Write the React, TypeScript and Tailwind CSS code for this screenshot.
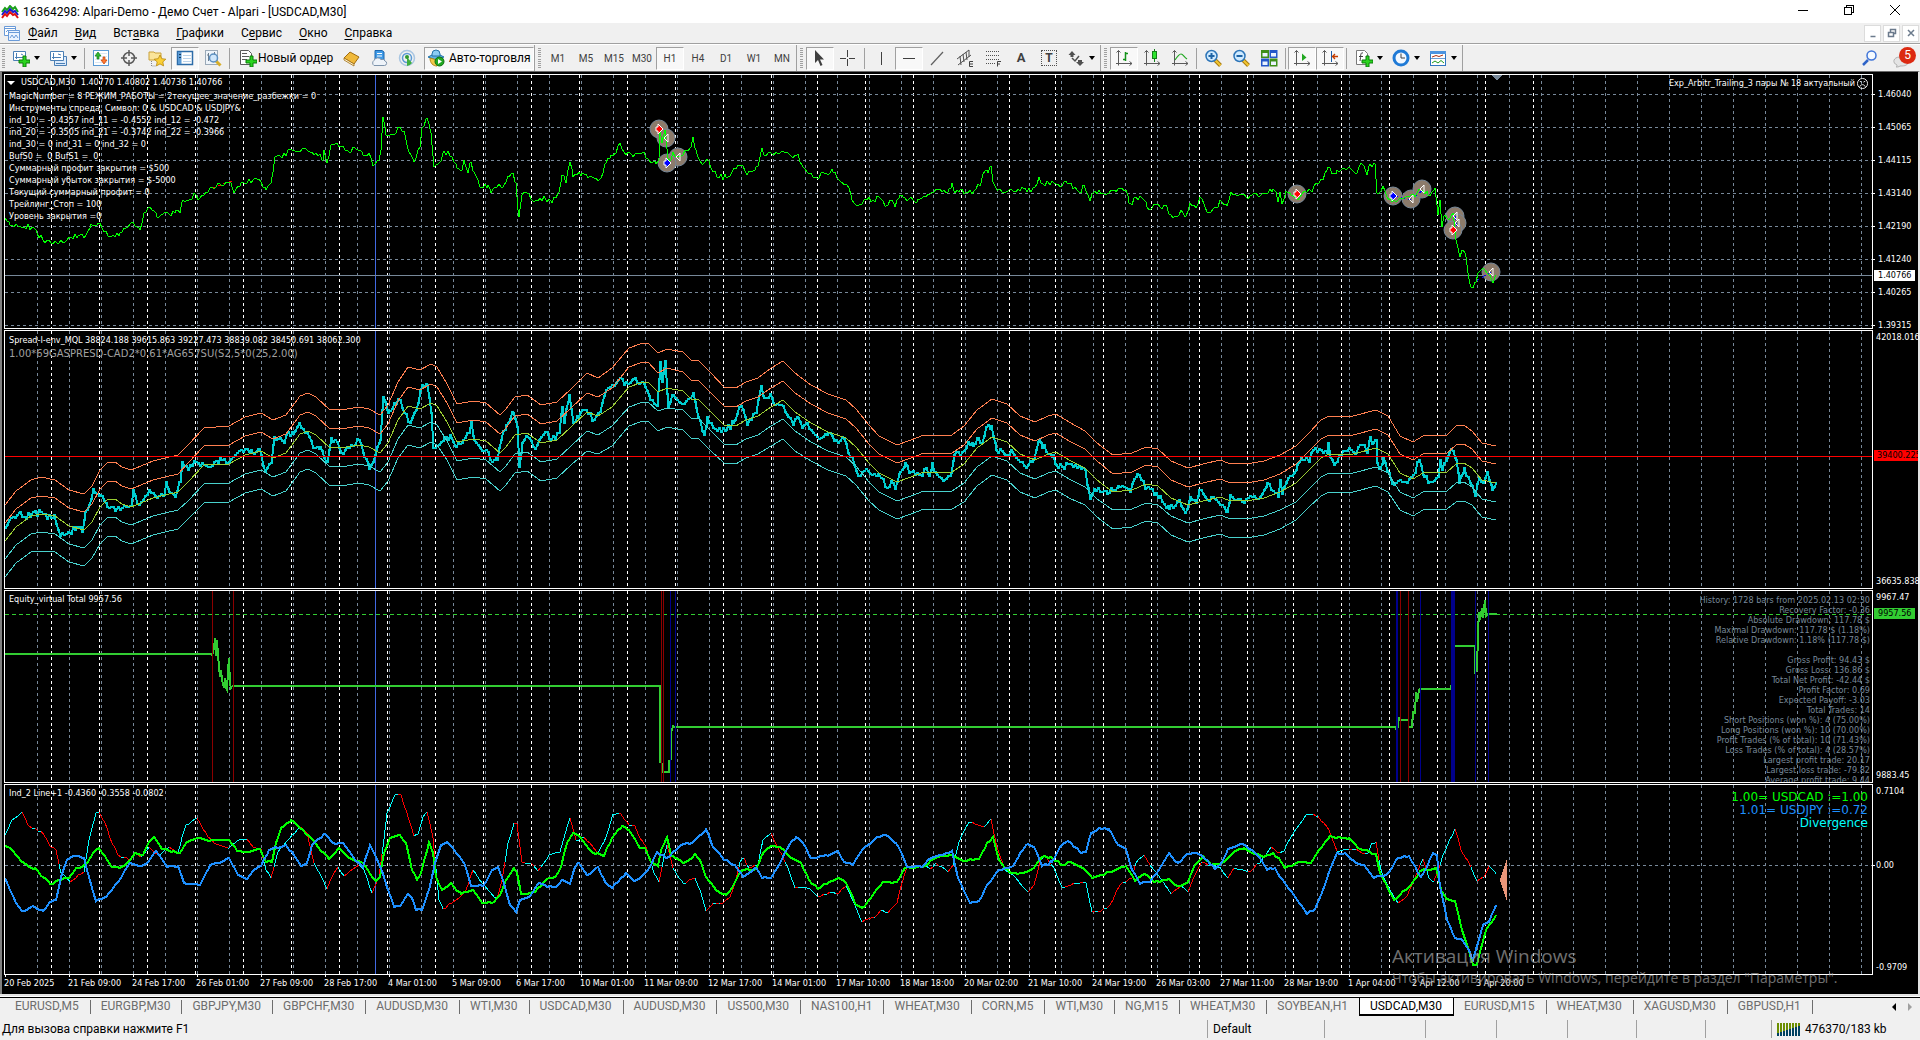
import type { ReactNode } from "react";
import clsx from "clsx";

type Point = [number, number];

const LEFT = 5;
const WIDTH = 1867;

const parse = (data: string): Point[] =>
  data
    .trim()
    .split(/\s+/)
    .map((pair) => pair.split(",").map(Number) as Point);

const toPoints = (points: Point[]) => points.map(([x, y]) => `${x},${y}`).join(" ");

const toSteps = (points: Point[]) => points.map(([x, y]) => `${x},${y} ${x + 1},${y}`).join(" ");

// Fills the space between two anchors with bars, each a little off the straight line
function quote(data: string, step: number, noise: number) {
  const anchors = parse(data);
  const out: Point[] = [];
  let seed = 7;
  for (let i = 0; i < anchors.length - 1; i++) {
    const [x1, y1] = anchors[i];
    const [x2, y2] = anchors[i + 1];
    out.push([x1, y1]);
    for (let x = x1 + step; x < x2; x += step) {
      seed = (seed * 1103515245 + 12345) % 2147483648;
      const shift = (seed / 2147483648 - 0.5) * 2 * noise;
      out.push([x, Math.round(y1 + ((y2 - y1) * (x - x1)) / (x2 - x1) + shift)]);
    }
  }
  out.push(anchors[anchors.length - 1]);
  return out;
}

const price = quote(
  `5,218 10,225 16,224 24,227 32,227 37,233 45,243 55,241 63,243 71,237 78,236 84,238 91,224 98,223 104,232 111,237 120,233
  133,222 140,230 144,213 150,207 157,217 167,212 171,216 176,210 180,213 183,200 190,199 194,193 198,200 206,192 216,187
  227,182 231,183 234,193 241,183 247,183 255,178 261,182 266,190 271,183 275,157 282,158 288,150 302,149 310,152 320,154
  323,160 324,150 327,163 331,145 337,143 347,150 356,149 363,155 369,153 373,166 379,160 381,150 383,117 386,135 392,134
  400,127 405,135 409,152 414,162 420,147 422,128 427,118 431,133 434,167 439,163 444,151 452,157 457,168 462,170 464,160
  468,173 471,162 474,172 481,187 488,185 491,193 497,187 504,185 509,177 513,173 516,183 518,210 519,217 522,195 527,193
  534,202 545,198 552,203 559,192 562,175 566,183 570,162 573,177 582,173 588,178 601,178 606,163 611,155 616,153 620,143
  624,152 633,157 640,153 644,152 647,158 656,164 659,158 660,128 662,143 665,130 668,158 671,160 673,152 679,157 686,150
  691,147 693,137 696,150 703,164 707,159 711,168 717,177 726,177 732,172 741,165 747,175 756,167 759,162 762,148 764,155
  770,152 774,155 781,152 793,158 798,154 803,167 811,173 817,178 824,173 833,172 842,182 847,185 852,200 858,206 867,200
  873,200 879,197 886,206 890,200 895,207 900,195 903,197 909,199 918,199 928,194 936,189 942,192 949,189 952,183 955,193
  960,190 966,192 974,191 981,183 985,171 988,173 991,166 993,182 998,190 1004,193 1009,190 1016,192 1023,188 1027,192
  1035,187 1039,177 1043,184 1048,182 1054,183 1060,187 1067,183 1075,187 1081,193 1084,185 1090,201 1093,193 1103,193
  1116,192 1126,190 1129,203 1132,205 1136,197 1144,200 1147,207 1152,208 1158,204 1160,207 1167,207 1171,215 1177,217
  1181,210 1186,216 1190,203 1196,208 1200,197 1205,207 1211,212 1218,207 1220,200 1227,206 1231,192 1240,194 1246,197
  1264,193 1273,189 1276,192 1278,202 1280,192 1282,204 1287,192 1294,197 1300,197 1307,192 1312,192 1317,183 1323,180
  1328,167 1332,174 1337,170 1349,167 1357,173 1362,164 1367,175 1370,164 1375,164 1377,193 1383,186 1387,197 1392,202
  1400,198 1409,197 1417,193 1423,190 1428,195 1435,188 1438,215 1440,200 1442,227 1445,215 1449,220 1453,213 1456,240
  1460,257 1463,250 1466,257 1468,273 1471,287 1476,282 1479,272 1485,270 1490,275 1493,283 1496,275`,
  2,
  3,
);

const spread = quote(
  `5,528 11,518 20,512 24,517 31,514 41,512 47,519 54,515 60,536 69,533 76,527 82,532 85,512 89,505 93,489 100,495 107,507
  116,509 131,506 133,490 137,504 143,500 149,490 157,498 164,495 166,482 169,492 175,497 180,482 182,462 188,470 194,461
  208,467 222,460 229,462 237,453 245,449 252,453 259,449 265,472 271,463 274,437 284,443 288,432 293,434 299,423 307,433
  313,448 320,447 327,462 331,438 337,442 341,453 351,445 359,440 364,457 369,469 375,455 380,440 383,397 388,413 394,403
  400,400 404,413 410,423 416,410 422,385 427,385 431,413 433,448 439,445 444,437 451,438 456,447 463,440 469,433 471,422
  474,440 480,448 486,450 492,462 497,460 501,440 506,425 513,413 517,427 519,467 522,443 527,437 535,449 541,437 545,432
  551,440 559,433 562,407 564,423 569,395 573,423 578,418 584,410 594,420 600,412 606,390 612,385 620,378 624,385 633,379
  640,383 645,387 650,400 657,406 660,362 662,382 665,361 668,407 673,395 680,403 688,399 693,393 696,408 704,435 707,417
  711,423 717,431 726,430 733,423 739,407 743,410 747,425 756,413 761,386 764,398 770,394 773,403 781,405 788,417 793,425
  798,418 802,428 807,423 811,430 817,437 828,433 834,441 844,439 848,453 852,457 858,476 864,471 879,476 887,488 891,481
  895,489 900,472 905,463 909,473 920,475 926,468 929,476 932,463 935,472 944,480 951,473 954,455 962,452 968,442 973,446
  978,438 982,443 986,427 991,426 996,450 1005,455 1012,452 1018,460 1026,468 1034,459 1039,440 1042,448 1044,445 1048,454
  1053,455 1056,465 1062,467 1069,464 1077,468 1085,470 1088,488 1090,499 1094,489 1107,494 1118,486 1130,492 1137,474
  1146,488 1156,493 1162,502 1169,509 1179,500 1185,513 1190,497 1196,503 1199,490 1205,497 1216,500 1222,505 1227,512
  1230,495 1242,502 1252,497 1260,497 1267,483 1278,497 1280,480 1282,494 1288,478 1294,473 1297,465 1302,460 1309,462
  1313,450 1327,453 1328,443 1330,457 1335,463 1339,455 1349,448 1356,453 1362,445 1367,453 1370,437 1373,443 1376,440
  1377,463 1380,468 1383,458 1392,484 1400,480 1407,483 1413,475 1419,460 1424,477 1430,482 1438,477 1440,460 1442,470
  1447,458 1451,449 1456,460 1459,483 1464,468 1470,483 1475,496 1479,478 1483,483 1487,472 1492,490 1496,483`,
  2,
  3,
);

const average = parse(
  `5,541 16,527 31,516 41,514 55,516 69,526 84,530 92,522 100,507 108,499 115,499 122,504 131,507 141,503 153,498 165,495
  178,492 188,482 204,465 229,464 245,455 261,451 273,458 286,453 300,434 308,431 316,435 330,448 347,447 359,445 369,447
  380,453 388,443 398,420 408,406 420,409 431,403 437,406 447,422 457,442 473,439 486,441 500,453 506,447 515,435 527,433
  541,443 557,440 571,427 587,412 598,416 612,407 629,387 640,383 648,382 658,392 667,388 683,391 691,399 699,400 711,412
  724,425 736,426 746,420 758,416 771,407 783,400 795,412 811,423 828,432 846,438 856,447 869,463 879,473 897,482 911,477
  924,472 952,472 964,464 977,448 992,437 1007,442 1020,454 1035,460 1048,454 1056,452 1069,460 1085,468 1097,480 1113,492
  1132,490 1146,484 1158,486 1171,498 1188,505 1203,501 1220,497 1228,500 1246,501 1264,498 1280,492 1296,483 1309,470
  1321,458 1329,454 1353,454 1376,448 1388,454 1400,473 1413,479 1423,473 1447,472 1456,464 1464,463 1472,468 1482,480
  1496,483`,
);

// The envelope widens with the price level
const envelope = (k: number) =>
  average.map(([x, y]): Point => [x, Math.round(y - k * (18 + (540 - y) * 0.01))]);

const equity = [
  "5,654 212,654",
  "212,656 214,648 215,638 216,656 217,640 218,656 220,677 221,670 222,680 224,688 225,678 226,688 227,690 228,670 229,658 230,684 231,688 232,686",
  "232,686 660,686 660,763",
  "662,763 663,772 669,772 669,760",
  "671,760 671,733 673,726 675,727 1396,727 1397,732 1399,717 1400,720 1408,720",
  "1409,727 1412,727 1413,712 1415,713 1416,692 1417,702 1419,690 1420,689 1451,689 1451,685",
  "1455,646 1475,646 1475,672 1477,670 1478,633 1479,612 1480,620 1482,608 1483,618 1485,600 1486,616 1488,614 1497,614",
];

const equityMarks = [
  { x: 212, w: 1, color: "#8b0000" },
  { x: 233, w: 1, color: "#8b0000" },
  { x: 661, w: 1, color: "#8b0000" },
  { x: 663, w: 1, color: "#8b0000" },
  { x: 670, w: 1, color: "#00008b" },
  { x: 675, w: 1, color: "#00008b" },
  { x: 1396, w: 2, color: "#00008b" },
  { x: 1400, w: 1, color: "#8b0000" },
  { x: 1408, w: 1, color: "#8b0000" },
  { x: 1420, w: 1, color: "#00008b" },
  { x: 1451, w: 4, color: "#00008b" },
  { x: 1475, w: 1, color: "#00008b" },
  { x: 1488, w: 1, color: "#00008b" },
];

const usdcad = quote(
  `5,846 10,848 18,857 28,866 35,868 43,877 50,884 61,880 69,878 76,868 86,865 93,853 99,848 106,858 112,867 119,868 127,863
  135,853 143,855 149,842 154,837 162,849 180,853 186,843 197,838 206,840 229,840 237,851 249,852 260,849 266,862 272,862
  276,843 281,828 291,820 300,828 310,837 318,847 329,859 339,848 349,858 363,863 369,872 376,881 380,877 384,853 390,838
  400,835 406,843 412,870 417,880 421,873 429,842 433,853 436,877 442,890 451,883 461,894 473,890 483,903 494,902 500,895
  506,880 514,868 517,873 521,894 535,892 549,878 555,877 561,867 567,843 573,833 580,837 592,852 604,856 612,838 622,826
  629,830 640,848 645,848 652,863 658,866 661,850 667,837 671,855 683,863 689,860 695,854 700,860 705,875 716,890 726,895
  732,888 741,871 756,869 764,852 771,846 781,848 791,858 801,863 809,880 818,889 829,882 838,878 846,883 856,905 862,908
  871,898 883,882 897,882 905,868 922,867 938,857 952,855 964,861 979,859 987,843 993,837 999,860 1009,872 1020,873
  1034,868 1042,857 1052,858 1062,865 1071,862 1085,870 1092,878 1109,872 1126,866 1135,881 1145,874 1154,882 1169,879
  1178,886 1188,882 1195,865 1203,856 1211,865 1222,863 1234,852 1244,848 1252,853 1264,857 1273,853 1280,860 1285,868
  1296,863 1311,863 1319,850 1330,836 1349,838 1360,849 1376,854 1380,873 1394,900 1411,885 1421,871 1436,868 1441,890
  1447,899 1455,901 1462,930 1468,948 1473,965 1477,964 1486,930 1496,915`,
  3,
  1,
);

const usdjpy = quote(
  `5,878 10,890 16,903 22,911 33,906 43,911 49,903 56,900 61,877 67,860 76,856 84,858 89,877 96,901 106,897 118,882 130,863
  141,866 148,862 156,851 167,867 178,866 184,883 200,885 210,865 222,862 229,858 238,875 247,879 254,870 261,866 269,850
  286,845 294,855 301,866 307,863 312,845 325,834 333,843 343,843 353,857 363,867 370,845 376,857 384,877 394,907 401,905
  408,894 413,900 416,910 422,910 429,890 435,863 441,845 447,842 453,848 465,865 471,886 484,885 492,870 498,867 503,880
  510,905 516,912 520,900 531,895 539,883 547,887 556,887 562,880 570,884 575,867 579,863 587,875 598,867 605,882 612,888
  626,873 634,881 640,878 648,870 657,852 667,858 681,845 693,842 706,829 713,847 724,860 735,865 743,877 756,868 762,878
  771,878 779,865 789,845 796,837 803,843 811,858 828,856 838,851 844,862 853,865 862,850 877,837 886,835 896,843 901,852
  907,867 922,867 931,858 952,851 958,878 970,903 979,901 987,885 999,870 1013,866 1020,853 1028,844 1034,847 1042,866
  1052,862 1060,847 1068,841 1081,853 1086,852 1091,833 1099,828 1109,829 1118,845 1126,849 1132,870 1140,884 1150,882
  1160,868 1169,853 1178,863 1187,854 1199,854 1207,860 1215,869 1220,865 1228,849 1242,844 1252,850 1260,858 1267,870
  1275,868 1280,877 1286,885 1296,898 1307,914 1315,909 1323,890 1331,867 1337,853 1345,853 1356,863 1364,865 1374,878
  1387,874 1398,858 1409,856 1421,877 1427,867 1433,853 1437,855 1440,887 1447,920 1455,938 1462,940 1469,950 1473,960
  1478,943 1483,925 1489,922 1496,905`,
  3,
  1,
);

const divergence = quote(
  `5,835 12,820 22,812 29,826 41,831 51,847 56,850 61,873 70,882 78,875 84,872 89,840 96,813 99,812 107,828 112,843 118,855
  129,860 135,853 141,857 149,847 159,856 169,847 178,853 182,837 186,825 197,818 208,837 216,844 229,848 239,840 247,839
  253,847 261,849 266,870 271,878 278,852 292,835 301,827 307,833 314,863 327,889 333,875 338,867 344,876 359,865 364,870
  372,893 379,877 383,847 387,813 395,795 401,795 408,817 414,836 418,834 423,817 427,812 433,838 439,900 443,909 453,902
  465,892 473,870 482,883 497,899 502,880 508,843 514,823 517,824 522,862 531,863 538,871 549,855 560,852 564,838 570,818
  576,840 584,837 598,853 606,837 613,814 621,814 629,825 635,826 640,838 646,847 654,873 659,882 664,857 667,845 673,868
  683,883 695,878 700,890 706,911 713,903 720,904 730,897 736,880 740,862 744,858 749,868 758,865 763,840 771,833 779,850
  788,868 795,888 809,888 818,897 830,892 839,893 846,886 854,903 862,922 875,917 882,910 888,913 897,903 902,883 907,867
  926,866 930,869 936,863 948,872 953,865 959,842 969,822 984,827 991,819 997,847 1005,870 1013,875 1028,892 1034,885
  1040,862 1045,855 1054,868 1062,887 1077,883 1086,883 1092,912 1101,911 1110,905 1120,885 1132,878 1136,863 1144,855
  1154,870 1162,880 1171,894 1181,886 1188,892 1195,875 1202,862 1220,867 1228,878 1234,868 1248,872 1260,863 1271,847
  1280,853 1284,851 1294,832 1307,814 1318,816 1329,830 1337,851 1356,849 1362,853 1368,853 1372,843 1376,842 1381,870
  1390,890 1398,903 1407,896 1417,873 1423,859 1429,878 1434,881 1443,855 1455,829 1462,852 1471,867 1477,881 1484,877
  1489,866 1496,874`,
  3,
  1,
);

const ZERO = 865;

// Bars that move away from zero are aqua, bars that come back are red
const divergencePath = (away: boolean) =>
  divergence
    .slice(1)
    .map(([x, y], i) => {
      const [px, py] = divergence[i];
      const grows = Math.abs(y - ZERO) >= Math.abs(py - ZERO);
      return grows === away ? `M${px} ${py}L${x} ${y}` : "";
    })
    .join("");

const hours = Array.from({ length: 58 }, (_, i) => 37 + i * 32);

const days = [
  ...Array.from({ length: 16 }, (_, i) => 51 + i * 48),
  ...Array.from({ length: 5 }, (_, i) => 817 + i * 48),
  ...Array.from({ length: 5 }, (_, i) => 1055 + i * 48),
  ...Array.from({ length: 6 }, (_, i) => 1293 + i * 48),
];

const deals = [
  { x: 659, y: 129, kind: "sell" },
  { x: 666, y: 138, kind: "close" },
  { x: 678, y: 157, kind: "close" },
  { x: 667, y: 163, kind: "buy" },
  { x: 1297, y: 194, kind: "sell" },
  { x: 1393, y: 196, kind: "buy" },
  { x: 1411, y: 199, kind: "close" },
  { x: 1422, y: 189, kind: "close" },
  { x: 1455, y: 216, kind: "close" },
  { x: 1457, y: 223, kind: "close" },
  { x: 1453, y: 230, kind: "sell" },
  { x: 1491, y: 272, kind: "close" },
];

const comment = [
  "MagicNumber = 8 РЕЖИМ_РАБОТЫ = 2текущее_значение_разбежки = 0",
  "Инструменты спреда, Символ: 0 & USDCAD & USDJPY&",
  "ind_10 = -0.4357 ind_11 = -0.4552 ind_12 = -0.472",
  "ind_20 = -0.3505 ind_21 = -0.3742 ind_22 = -0.3966",
  "ind_30 = 0 ind_31 = 0 ind_32 = 0",
  "BufS0 =  0 BufS1 =  0",
  "Суммарный профит закрытия = $500",
  "Суммарный убыток закрытия = $-5000",
  "Текущий суммарный профит = 0",
  "Трейлинг_Стоп = 100",
  "Уровень закрытия =0",
];

const report = [
  "History: 1728 bars from 2025.02.13 02:30",
  "Recovery Factor: -0.36",
  "Absolute Drawdown: 117.78 $",
  "Maximal Drawdown: 117.78 $ (1.18%)",
  "Relative Drawdown: 1.18% (117.78 $)",
  "",
  "Gross Profit: 94.43 $",
  "Gross Loss: 136.86 $",
  "Total Net Profit: -42.44 $",
  "Profit Factor: 0.69",
  "Expected Payoff: -3.03",
  "Total Trades: 14",
  "Short Positions (won %): 4 (75.00%)",
  "Long Positions (won %): 10 (70.00%)",
  "Profit Trades (% of total): 10 (71.43%)",
  "Loss Trades (% of total): 4 (28.57%)",
  "Largest profit trade: 20.17",
  "Largest loss trade: -79.82",
  "Average profit trade: 9.44",
];

const prices = ["1.46040", "1.45065", "1.44115", "1.43140", "1.42190", "1.41240", "1.40265", "1.39315"];

const dates = [
  "20 Feb 2025", "21 Feb 09:00", "24 Feb 17:00", "26 Feb 01:00", "27 Feb 09:00", "28 Feb 17:00",
  "4 Mar 01:00", "5 Mar 09:00", "6 Mar 17:00", "10 Mar 01:00", "11 Mar 09:00", "12 Mar 17:00",
  "14 Mar 01:00", "17 Mar 10:00", "18 Mar 18:00", "20 Mar 02:00", "21 Mar 10:00", "24 Mar 19:00",
  "26 Mar 03:00", "27 Mar 11:00", "28 Mar 19:00", "1 Apr 04:00", "2 Apr 12:00", "3 Apr 20:00",
];

const tabs = [
  "EURUSD,M5", "EURGBP,M30", "GBPJPY,M30", "GBPCHF,M30", "AUDUSD,M30", "WTI,M30", "USDCAD,M30",
  "AUDUSD,M30", "US500,M30", "NAS100,H1", "WHEAT,M30", "CORN,M5", "WTI,M30", "NG,M15", "WHEAT,M30",
  "SOYBEAN,H1", "USDCAD,M30", "EURUSD,M15", "WHEAT,M30", "XAGUSD,M30", "GBPUSD,H1",
];
const ACTIVE_TAB = 16;

const menu = [
  ["", "Ф", "айл"],
  ["", "В", "ид"],
  ["Вст", "а", "вка"],
  ["", "Г", "рафики"],
  ["С", "е", "рвис"],
  ["", "О", "кно"],
  ["", "С", "правка"],
];

const periods = ["M1", "M5", "M15", "M30", "H1", "H4", "D1", "W1", "MN"];

function Icon({ children, size = 18 }: { children: ReactNode; size?: number }) {
  return (
    <svg width={size} height={size} viewBox="0 0 18 18" fill="none" className="shrink-0" aria-hidden="true">
      {children}
    </svg>
  );
}

const Plus = () => (
  <path d="M11 7h3v4h4v3h-4v4h-3v-4H7v-3h4z" fill="#2bd41f" stroke="#0b7d0b" />
);

const Axes = () => <path d="M3.500 1.500v15M1 14.500h16M1.500 3.500l2-2 2 2M14.500 12.500l2.500 2-2.500 2" stroke="#5a5a5a" />;

function Lens({ sign }: { sign: string }) {
  return (
    <Icon>
      <path d="M11 11l5.500 5.500" stroke="#a87b10" strokeWidth="4" />
      <path d="M11 11l5.500 5.500" stroke="#f2c632" strokeWidth="2" />
      <circle cx="7.500" cy="7" r="5.500" fill="#cfeaff" stroke="#2d75b8" strokeWidth="1.500" />
      <path d={sign} stroke="#1f64a5" strokeWidth="2" />
    </Icon>
  );
}

function Tool({ label, pressed, children }: { label: string; pressed?: boolean; children: ReactNode }) {
  return (
    <button
      type="button"
      aria-label={label}
      className={clsx(
        "flex h-[23px] w-7 shrink-0 items-center justify-center border",
        pressed ? "border-t-[#a0a0a0] border-r-white border-b-white border-l-[#a0a0a0] bg-[#f8f8f8]" : "border-transparent",
      )}
    >
      {children}
    </button>
  );
}

function MenuTool({ label, children }: { label: string; children: ReactNode }) {
  return (
    <button type="button" aria-label={label} className="flex h-[23px] w-[37px] shrink-0 items-center gap-1 pl-1">
      {children}
      <span className="border-x-[3px] border-t-4 border-x-transparent border-t-black" />
    </button>
  );
}

const Line = () => <span className="mx-[2px] h-[21px] w-px shrink-0 bg-[#a0a0a0]" />;

const Grip = () => (
  <span className="ml-[2px] mr-[3px] flex h-5 w-[3px] shrink-0 flex-col justify-between">
    {Array.from({ length: 10 }, (_, i) => (
      <span key={i} className="h-px bg-[#a0a0a0]" />
    ))}
  </span>
);

const BarEnd = () => <span className="mr-px h-[26px] w-px shrink-0 bg-[#a0a0a0]" />;

function Toolbar() {
  return (
    <div className="flex h-[27px] shrink-0 items-center overflow-hidden border-t border-white bg-[#f0f0f0] text-[#404040]">
      <Grip />
      <MenuTool label="Новый график">
        <Icon>
          <path d="M1.500 2.500h12v9h-12z" fill="#fff" stroke="#4a7fb5" />
          <path d="M4.500 4v6M3 8.500h8M9 5l2 1" stroke="#4a7fb5" />
          <Plus />
        </Icon>
      </MenuTool>
      <MenuTool label="Профили">
        <Icon>
          <path d="M5.500 7.500h12v9h-12z" fill="#dceafb" stroke="#4a7fb5" />
          <path d="M1.500 2.500h13v9h-13z" fill="#fff" stroke="#4a7fb5" />
          <path d="M4.500 4v6M3 8.500h9M9 5l3 1M7 14.500h9" stroke="#4a7fb5" />
        </Icon>
      </MenuTool>
      <Line />
      <Tool label="Обзор рынка">
        <Icon>
          <rect x="1.500" y="1.500" width="15" height="15" fill="#fff" stroke="#5b9bd5" />
          <path d="M3 4.500h12M3 7.500h12M3 10.500h12M3 13.500h12" stroke="#dbe7f3" />
          <path d="M6 3l3 4H7v3H5V7H3z" fill="#2eb82e" stroke="#14801a" strokeWidth=".7" />
          <path d="M12 15l-3-4h2V8h2v3h2z" fill="#ff7a33" stroke="#c43c00" strokeWidth=".7" />
        </Icon>
      </Tool>
      <Tool label="Окно данных">
        <Icon>
          <circle cx="9" cy="9" r="5.500" stroke="#5a5a5a" strokeWidth="1.500" />
          <path d="M9 1v6M9 11v6M1 9h6M11 9h6" stroke="#5a5a5a" strokeWidth="1.500" />
        </Icon>
      </Tool>
      <Tool label="Навигатор">
        <Icon>
          <path d="M1 3h5l1 1h6v7H1z" fill="#fbe59a" stroke="#c9a13a" />
          <path d="M3.500 12v5h4" stroke="#888" strokeDasharray="1 1" />
          <path d="M12 6l1.800 3.700 4 .5-3 2.700.8 4-3.600-2-3.600 2 .8-4-3-2.700 4-.5z" fill="#fbd036" stroke="#b8860b" strokeWidth=".8" />
        </Icon>
      </Tool>
      <Tool label="Терминал" pressed>
        <Icon>
          <rect x="1.500" y="2.500" width="15" height="13" fill="#fff" stroke="#2d6ca8" strokeWidth="1.500" />
          <path d="M2 3h3.500v12H2z" fill="#5b9bd5" />
          <path d="M7 6.500h8M7 9.500h8M7 12.500h8" stroke="#bcd3ea" />
          <path d="M3 5.500h2M3 8.500h2" stroke="#18395c" />
        </Icon>
      </Tool>
      <Tool label="Тестер стратегий">
        <Icon>
          <rect x="1.500" y="1.500" width="12" height="14" fill="#eef4fa" stroke="#9aa9b8" />
          <path d="M4.500 4v8M10.500 3v7M3 6h2" stroke="#6b7c8d" />
          <path d="M12 12l4.500 4.500" stroke="#d8ae2a" strokeWidth="3" />
          <circle cx="9.500" cy="9" r="4" fill="#cfe6fb" stroke="#5b8fc0" strokeWidth="1.500" />
        </Icon>
      </Tool>
      <Line />
      <button type="button" className="ml-1 flex h-[23px] shrink-0 items-center gap-px pl-[3px] text-[12px] leading-5 whitespace-nowrap text-black">
        <Icon>
          <path d="M1.500 1.500h8l3 3v11h-11z" fill="#fff" stroke="#5a5a5a" />
          <path d="M3 4.500h5M3 7.500h7M3 10.500h5" stroke="#5a5a5a" />
          <Plus />
        </Icon>
        <span className="w-[79px] text-left">Новый ордер</span>
      </button>
      <Tool label="Метаредактор">
        <Icon>
          <path d="M2 9l6-6 9 5-5 7z" fill="#f0b93a" stroke="#a06c10" />
          <path d="M2 9l10 6v2L2 11z" fill="#fff3cf" stroke="#a06c10" strokeWidth=".8" />
        </Icon>
      </Tool>
      <Tool label="Хостинг">
        <Icon>
          <path d="M5 1.500h7l2 1.500v8H5z" fill="#3f9be8" stroke="#1b66ad" />
          <path d="M7 4.500h5M7 7h5" stroke="#fff" />
          <path d="M4 16.500a3 3 0 010-5 4 4 0 017-1 3.200 3.200 0 014 1.500 2.300 2.300 0 01-.5 4.500z" fill="#eef3f9" stroke="#7d93ab" />
        </Icon>
      </Tool>
      <Tool label="Сигналы">
        <Icon>
          <circle cx="9" cy="9" r="7.500" stroke="#a9c6e2" strokeWidth="1.500" />
          <circle cx="9" cy="9" r="4.500" stroke="#5b9bd5" strokeWidth="1.500" />
          <path d="M9 8v9a8 8 0 005-3z" fill="#3fae3f" />
          <circle cx="9" cy="8" r="2" fill="#2f9a2f" />
        </Icon>
      </Tool>
      <button
        type="button"
        className="ml-[3px] flex h-[23px] w-[110px] shrink-0 items-center gap-1 border border-t-[#a0a0a0] border-r-white border-b-white border-l-[#a0a0a0] bg-[#f8f8f8] pl-[2px] text-[12px] leading-5 whitespace-nowrap text-black"
      >
        <Icon>
          <path d="M1 8l8-4 8 4-8 3z" fill="#5fb2e6" stroke="#2472a8" />
          <path d="M5 5a4 4 0 018 0v2H5z" fill="#8bcdf3" stroke="#2472a8" />
          <path d="M3 9c0 5 3 8 7 8v-6z" fill="#f2c94a" stroke="#b58a1a" />
          <circle cx="12.500" cy="12.500" r="4.500" fill="#22a822" stroke="#0c6f0c" />
          <path d="M11 10l4 2.500-4 2.500z" fill="#fff" />
        </Icon>
        Авто-торговля
      </button>
      <BarEnd />
      <Grip />
      <div className="flex w-[252px] shrink-0 text-[10px]">
        {periods.map((period) => (
          <Tool key={period} label={period} pressed={period === "H1"}>
            {period}
          </Tool>
        ))}
      </div>
      <BarEnd />
      <Grip />
      <Tool label="Курсор" pressed>
        <Icon>
          <path d="M4 1v13l3-3 2.500 6 2-1L9 10.500h4z" fill="#404040" />
        </Icon>
      </Tool>
      <Tool label="Перекрестие">
        <Icon>
          <path d="M8.500 1v7M8.500 10v7M1 9.500h6M10 9.500h6" stroke="#404040" />
        </Icon>
      </Tool>
      <Line />
      <Tool label="Вертикальная линия">
        <Icon>
          <path d="M9.500 3v13" stroke="#404040" />
        </Icon>
      </Tool>
      <Tool label="Горизонтальная линия" pressed>
        <Icon>
          <path d="M3 9.500h12" stroke="#404040" />
        </Icon>
      </Tool>
      <Tool label="Трендовая линия">
        <Icon>
          <path d="M3 16L15 3" stroke="#606060" strokeWidth="1.200" />
        </Icon>
      </Tool>
      <Tool label="Равноудаленный канал">
        <Icon>
          <path d="M1 10L13 1M2 16L15 6M4 7l1 9M7 5l1 8M10 3l1 8M13 1v7" stroke="#505050" />
          <path d="M17 12.500h-3.500v5H17M13.500 15H17" stroke="#404040" />
        </Icon>
      </Tool>
      <Tool label="Линии Фибоначчи">
        <Icon>
          <path d="M2 2.500h14M2 6.500h14M2 10.500h14M2 14.500h9" stroke="#505050" strokeDasharray="1 1" />
          <path d="M17 12.500h-3.500v5M13 15h3" stroke="#404040" />
        </Icon>
      </Tool>
      <Tool label="Текст">
        <span className="text-[13px] font-bold">A</span>
      </Tool>
      <Tool label="Текстовая метка">
        <span className="flex size-4 items-center justify-center border border-dotted border-[#505050] text-[12px] leading-none font-bold">T</span>
      </Tool>
      <MenuTool label="Стрелки">
        <Icon>
          <path d="M5 2l3.500 4H6.500v2h-3V6H1.500zM13 17l-4-4h2v-2h4v2h2z" fill="#505050" />
          <path d="M5 9l3 3 4-5" stroke="#505050" strokeWidth="1.500" />
        </Icon>
      </MenuTool>
      <BarEnd />
      <Grip />
      <Tool label="Бары" pressed>
        <Icon>
          <Axes />
          <path d="M10.500 3v9M10.500 4.500H13M8 10.500h2.500" stroke="#14921a" strokeWidth="1.500" />
        </Icon>
      </Tool>
      <Tool label="Японские свечи">
        <Icon>
          <Axes />
          <path d="M11.500 0v13" stroke="#14801a" />
          <rect x="9.500" y="2.500" width="4" height="7" fill="#2ee52e" stroke="#14801a" />
        </Icon>
      </Tool>
      <Tool label="Линия">
        <Icon>
          <Axes />
          <path d="M4 11c2-3 4-6 6-6s3 3 6 5" stroke="#22a822" strokeWidth="1.200" />
        </Icon>
      </Tool>
      <Line />
      <Tool label="Увеличить">
        <Lens sign="M4.500 7h6M7.500 4v6" />
      </Tool>
      <Tool label="Уменьшить">
        <Lens sign="M4.500 7h6" />
      </Tool>
      <Tool label="Окна плиткой">
        <Icon>
          <path d="M1 1h8v8H1zM9.500 9.500h8v8h-8z" fill="#3f8f1a" />
          <path d="M9.500 1h8v8h-8zM1 9.500h8v8H1z" fill="#2457c9" />
          <path d="M2.500 4h5v3.500h-5zM11 4h5v3.500h-5zM2.500 12.500h5V16h-5zM11 12.500h5V16h-5z" fill="#eaf3ff" />
        </Icon>
      </Tool>
      <Line />
      <Tool label="Автопрокрутка" pressed>
        <Icon>
          <Axes />
          <path d="M9 4.500l4.500 4L9 12z" fill="#22a822" />
        </Icon>
      </Tool>
      <Tool label="Сдвиг графика" pressed>
        <Icon>
          <Axes />
          <path d="M10.500 2v11" stroke="#1f5fa8" />
          <path d="M17 7.500h-5M14 5l-2.500 2.500L14 10" stroke="#c43c00" strokeWidth="1.300" />
        </Icon>
      </Tool>
      <div className="flex items-center gap-[2px]">
        <Line />
        <MenuTool label="Индикаторы">
          <Icon>
            <path d="M1.500 1.500h8l3 3v11h-11z" fill="#fff" stroke="#7a7a7a" />
            <path d="M8 4c-3-1-2 3-3 8M4 7.500h4" stroke="#404040" />
            <Plus />
          </Icon>
        </MenuTool>
      </div>
      <MenuTool label="Периоды">
        <Icon>
          <circle cx="9" cy="9" r="7" fill="#f2f8ff" stroke="#1f7ad6" strokeWidth="3" />
          <path d="M9 4.500V9h4" stroke="#404040" />
        </Icon>
      </MenuTool>
      <MenuTool label="Шаблоны">
        <Icon>
          <rect x="1.500" y="2.500" width="15" height="14" fill="#fff" stroke="#2f74c0" />
          <path d="M1 2h16v3H1z" fill="#4c94e0" />
          <path d="M2 9.500h14" stroke="#2f74c0" strokeWidth=".7" />
          <path d="M3 8l4-1.500 3 1 4-1.500" stroke="#b03010" />
          <path d="M3 14l3-2 3 2 3-2.500 3 2.500" stroke="#1c9a1c" />
        </Icon>
      </MenuTool>
      <BarEnd />
      <div className="ml-auto flex items-center gap-[14px] pr-1">
        <button type="button" aria-label="Поиск">
          <Icon>
            <path d="M2 16l5-5" stroke="#2f64c8" strokeWidth="2.500" />
            <circle cx="10.500" cy="6.500" r="4.500" fill="#f5faff" stroke="#3f74d8" strokeWidth="1.500" />
          </Icon>
        </button>
        <button type="button" aria-label="Уведомления" className="relative flex h-[22px] w-[23px] items-end">
          <Icon>
            <path d="M3 16c1-1 1-1 1-2-5-2-4-8 3-8s9 3 8 6-5 3-8 3c-1 1-3 1-4 1z" fill="#e4e4e4" stroke="#b0b0b0" />
          </Icon>
          <span className="absolute top-0 right-0 size-[17px] rounded-full bg-[#dc2a12] text-center text-[12px] leading-[17px] text-white">
            5
          </span>
        </button>
      </div>
    </div>
  );
}

function Grid({ top, height }: { top: number; height: number }) {
  return (
    <>
      {hours.map((x) => (
        <path key={x} d={`M${x}.5 ${top}v${height}`} stroke="#778899" strokeDasharray="3 3" />
      ))}
      {days.map((x) => (
        <path key={x} d={`M${x}.5 ${top}v${height}`} stroke="#fff" strokeDasharray="3 3" />
      ))}
      <path d={`M375.5 ${top}v${height}`} stroke="#4169e1" />
    </>
  );
}

type PanelProps = {
  title: string;
  top: number;
  height: number;
  grow: string;
  drawing: ReactNode;
  children: ReactNode;
  scale: ReactNode;
};

function Panel({ title, top, height, grow, drawing, children, scale }: PanelProps) {
  return (
    <section className={clsx("flex min-h-0 basis-0", grow)}>
      <div className="relative flex min-w-0 flex-1 flex-col overflow-hidden border border-white">
        <svg
          className="absolute inset-0 size-full"
          viewBox={`${LEFT} ${top} ${WIDTH} ${height}`}
          preserveAspectRatio="none"
          shapeRendering="crispEdges"
          fill="none"
          role="img"
          aria-label={title}
        >
          <Grid top={top} height={height} />
          {drawing}
        </svg>
        <div className="relative flex flex-1 flex-col">{children}</div>
      </div>
      <div className="relative flex w-[45px] shrink-0 flex-col justify-between">{scale}</div>
    </section>
  );
}

function Deal({ x, y, kind }: { x: number; y: number; kind: string }) {
  return (
    <g transform={`translate(${x} ${y})`} shapeRendering="auto">
      {kind === "close" ? (
        <path d="M2-4L-2 0L2 4z" stroke="#fff" />
      ) : (
        <path
          d="M-3-2h2v-3l5 5-5 5v-3h-2z"
          fill={kind === "sell" ? "#ff0000" : "#0000ff"}
          stroke="#fff"
        />
      )}
    </g>
  );
}

function Charts() {
  return (
    <main className="flex min-h-0 flex-1 flex-col border-x-2 border-t border-l-[#808080] border-r-[#e3e3e3] border-t-[#696969] bg-black pt-[2px] pl-[2px] font-['DejaVu_Sans_Condensed','DejaVu_Sans',sans-serif] text-[9px] text-white">
      <div className="flex min-h-0 flex-1 flex-col gap-px">
        <Panel
          title="USDCAD,M30"
          top={75}
          height={253}
          grow="grow-[255]"
          drawing={
            <>
              {prices.map((label, i) => (
                <path key={label} d={`M5 ${94 + i * 33}.5h1867`} stroke="#778899" strokeDasharray="3 3" />
              ))}
              <path d="M5 275.5h1867" stroke="#778899" />
              <path d="M1492 75h10l-5 6z" fill="#778899" />
              {deals.map(({ x, y }) => (
                <circle key={`${x}-${y}`} cx={x} cy={y} r="9" fill="#8c7b6b" stroke="#778899" shapeRendering="auto" />
              ))}
              <path d="M212 188L232 181" stroke="#ff0000" strokeDasharray="3 3" />
              <path d="M1394 196l16 4 12-9M1455 216l2 10M1476 281l15-9" stroke="#0000ff" strokeDasharray="4 3" />
              <polyline points={toPoints(price)} stroke="#00ff00" />
              {deals.map((deal) => (
                <Deal key={`${deal.x}-${deal.y}`} {...deal} />
              ))}
            </>
          }
          scale={
            <>
              <div className="pt-1">
                {prices.map((label) => (
                  <div key={label} className="flex h-[33px] items-center gap-[3px]">
                    <span className="h-px w-[2px] bg-white" />
                    {label}
                  </div>
                ))}
              </div>
              <span className="absolute top-[196px] left-px bg-white px-1 leading-[11px] text-black">1.40766</span>
            </>
          }
        >
          <div className="flex h-[15px] justify-between pr-1 pl-[2px] leading-[15px]">
            <div className="flex items-center gap-[6px]">
              <span className="border-x-4 border-t-4 border-x-transparent border-t-white" />
              <span className="whitespace-pre">USDCAD,M30  1.40770 1.40802 1.40736 1.40766</span>
            </div>
            <div className="flex items-center gap-[2px] pt-[2px]">
              <span>Exp_Arbitr_Trailing_3 пары № 18 актуальный</span>
              <svg width="11" height="11" viewBox="0 0 12 12" fill="none" stroke="#fff" aria-hidden="true">
                <circle cx="6" cy="6" r="5.500" />
                <path d="M3 3.500l2 1M9 3.500l-2 1M3 9.500c1-3 5-3 6 0" />
              </svg>
            </div>
          </div>
          <div className="pl-1 leading-3 whitespace-pre">
            {comment.map((line) => (
              <p key={line}>{line}</p>
            ))}
          </div>
        </Panel>

        <Panel
          title="Spread-I-env_MQL"
          top={331}
          height={257}
          grow="grow-[259]"
          drawing={
            <>
              <polyline points={toSteps(spread)} stroke="#00ced1" strokeWidth="2" />
              <polyline points={toPoints(envelope(2))} stroke="#ff7f50" />
              <polyline points={toPoints(envelope(1))} stroke="#ff7f50" />
              <polyline points={toPoints(envelope(0))} stroke="#9acd32" />
              <polyline points={toPoints(envelope(-1))} stroke="#48d1cc" />
              <polyline points={toPoints(envelope(-2))} stroke="#48d1cc" />
              <path d="M5 456.5h1867" stroke="#ff0000" />
            </>
          }
          scale={
            <>
              <span className="pt-[2px] pl-[3px] leading-[11px]">42018.016</span>
              <span className="pb-[2px] pl-[3px] leading-[11px]">36635.838</span>
              <span className="absolute top-[120px] left-px w-[44px] overflow-hidden bg-[#ff0000] pl-[3px] leading-[11px] text-black">
                39400.225
              </span>
            </>
          }
        >
          <p className="pt-[3px] pl-1 leading-3">
            Spread-I-env_MQL 38824.188 39615.863 39227.473 38839.082 38450.691 38062.300
          </p>
          <p className="pl-1 font-['DejaVu_Sans',sans-serif] text-[10px] leading-4 text-[#a0a0a0]">
            1.00*69GASPRESD-CAD2*0.61*AG657SU(S2,5*0(25,2.00)
          </p>
        </Panel>

        <Panel
          title="Equity_virtual"
          top={591}
          height={191}
          grow="grow-[193]"
          drawing={
            <>
              <path d="M5 614.5h1867" stroke="#32cd32" strokeDasharray="4 3" />
              {equity.map((run) => (
                <polyline key={run} points={run} stroke="#32cd32" strokeWidth="2" />
              ))}
              {equityMarks.map(({ x, w, color }) => (
                <rect key={x} x={x} y="591" width={w} height="191" fill={color} />
              ))}
            </>
          }
          scale={
            <>
              <span className="pt-[2px] pl-[3px] leading-[11px]">9967.47</span>
              <span className="pb-[2px] pl-[3px] leading-[11px]">9883.45</span>
              <span className="absolute top-[18px] left-px bg-[#32cd32] px-1 leading-[11px] text-black">9957.56</span>
            </>
          }
        >
          <div className="flex justify-between pr-[2px] pl-1">
            <p className="pt-[2px] leading-3">Equity_virtual Total 9957.56</p>
            <div className="h-[191px] overflow-hidden pt-1 text-right leading-[10px] text-[#778899]">
              {report.map((line, i) => (
                <p key={i} className="min-h-[10px]">{line}</p>
              ))}
            </div>
          </div>
        </Panel>

        <Panel
          title="Ind_2"
          top={785}
          height={189}
          grow="grow-[191]"
          drawing={
            <>
              <path d="M5 865.5h1867" stroke="#778899" strokeDasharray="3 3" />
              <path d={divergencePath(true)} stroke="#00ffff" />
              <path d={divergencePath(false)} stroke="#ff0000" />
              <polyline points={toPoints(usdcad)} stroke="#00ff00" strokeWidth="2" />
              <polyline points={toPoints(usdjpy)} stroke="#1e90ff" strokeWidth="2" />
              <path d="M1500 880l7-21v42z" fill="#e9967a" />
            </>
          }
          scale={
            <>
              <span className="pt-[2px] pl-[3px] leading-[11px]">0.7104</span>
              <span className="pb-[2px] pl-[3px] leading-[11px]">-0.9709</span>
              <span className="absolute top-[76px] left-0 flex items-center gap-px leading-[11px]">
                <span className="h-px w-[2px] bg-white" />
                0.00
              </span>
            </>
          }
        >
          <div className="flex justify-between pr-1 pl-1">
            <p className="pt-[2px] leading-3">Ind_2 Line+1 -0.4360 -0.3558 -0.0802</p>
            <div className="pt-[6px] text-right font-['DejaVu_Sans',sans-serif] text-[12px] leading-[13px]">
              <p className="text-[#00ff00]">1.00= USDCAD :=1.00</p>
              <p className="text-[#1e90ff]">1.01= USDJPY :=0.72</p>
              <p className="text-[#00ffff]">Divergence</p>
            </div>
          </div>
        </Panel>
      </div>

      <div className="flex h-[19px] shrink-0">
        {dates.map((date) => (
          <div key={date} className="w-16 shrink-0 whitespace-nowrap">
            <span className="ml-px block h-[2px] w-px bg-white" />
            <span className="block leading-3">{date}</span>
          </div>
        ))}
      </div>
    </main>
  );
}

function Tabs() {
  return (
    <nav className="flex h-6 shrink-0 flex-col bg-[#f0f0f0]">
      <div className="h-[3px] shrink-0 border-b border-white bg-[#e3e3e3]" />
      <div className="flex h-[21px] items-start overflow-hidden border-t border-black pl-[5px] text-[#6d6d6d]">
        {tabs.map((tab, i) => (
          <button
            key={i}
            type="button"
            className={clsx(
              "flex shrink-0 justify-center pr-[11px] pl-[10px] text-[12px] whitespace-nowrap",
              i === ACTIVE_TAB
                ? "h-[18px] border-x border-b-2 border-black bg-white leading-[17px] text-black"
                : "mt-[2px] h-[14px] leading-[13px]",
              i !== ACTIVE_TAB && i !== ACTIVE_TAB - 1 && "border-r border-[#6d6d6d]",
            )}
          >
            {tab}
          </button>
        ))}
        <div className="ml-auto flex h-[18px] items-center gap-3 pr-2">
          <button type="button" aria-label="Назад" className="border-y-4 border-r-4 border-y-transparent border-r-black" />
          <button type="button" aria-label="Вперед" className="border-y-4 border-l-4 border-y-transparent border-l-[#a0a0a0]" />
        </div>
      </div>
    </nav>
  );
}

function StatusBar() {
  return (
    <footer className="flex h-[22px] shrink-0 items-center bg-[#f0f0f0] text-[12px] leading-5 whitespace-nowrap text-black">
      <span className="flex-1 pl-[2px]">Для вызова справки нажмите F1</span>
      <span className="w-[117px] border-l border-[#a0a0a0] pl-[5px] leading-[18px]">Default</span>
      <span className="h-[18px] w-[101px] border-l border-[#a0a0a0]" />
      <span className="h-[18px] w-[71px] border-l border-[#a0a0a0]" />
      <span className="h-[18px] w-[71px] border-l border-[#a0a0a0]" />
      <span className="h-[18px] w-[69px] border-l border-[#a0a0a0]" />
      <span className="h-[18px] w-[69px] border-l border-[#a0a0a0]" />
      <span className="h-[18px] w-[66px] border-l border-[#a0a0a0]" />
      <span className="flex w-[149px] items-center gap-1 border-l border-[#a0a0a0] pl-[5px] leading-[18px]">
        <svg width="24" height="13" shapeRendering="crispEdges" aria-hidden="true">
          {Array.from({ length: 8 }, (_, i) => (
            <g key={i}>
              <rect x={i * 3} y="0" width="2" height="13" fill="#6b8e00" />
              <rect x={i * 3} y={10 - i} width="2" height={3 + i} fill="#004060" />
            </g>
          ))}
        </svg>
        476370/183 kb
      </span>
    </footer>
  );
}

export default function App() {
  return (
    <div className="relative flex h-screen min-h-[640px] flex-col overflow-hidden bg-white font-['Roboto','Open_Sans',sans-serif] text-black">
      <header className="flex h-[23px] shrink-0 items-center bg-white">
        <svg width="18" height="14" viewBox="0 0 18 14" fill="none" strokeWidth="2" className="ml-px" aria-hidden="true">
          <path d="M1 7l3-4 2 2 3-4 3 3 2-2 3 5" stroke="#18a018" />
          <path d="M1 10l3-4 2 2 3-4 3 3 2-1 3 4" stroke="#1a1ad0" />
          <path d="M1 13l3-4 2 2 3-4 3 3 2-1 3 4" stroke="#e01010" />
        </svg>
        <h1 className="ml-1 text-[12px] leading-5">16364298: Alpari-Demo - Демо Счет - Alpari - [USDCAD,M30]</h1>
        <div className="ml-auto flex items-center pr-[2px] pb-[3px]">
          <button type="button" aria-label="Свернуть" className="flex w-[46px] justify-center">
            <svg width="10" height="10" stroke="#000" shapeRendering="crispEdges"><path d="M0 5.500h10" /></svg>
          </button>
          <button type="button" aria-label="Восстановить" className="flex w-[46px] justify-center">
            <svg width="10" height="10" fill="none" stroke="#000" shapeRendering="crispEdges">
              <path d="M.5 2.500h7v7h-7zM2.500 2.500v-2h7v7h-2" />
            </svg>
          </button>
          <button type="button" aria-label="Закрыть" className="flex w-[46px] justify-center">
            <svg width="10" height="10" stroke="#000"><path d="M0 0l10 10M10 0L0 10" /></svg>
          </button>
        </div>
      </header>

      <nav className="flex h-[21px] shrink-0 items-center border-b border-[#a0a0a0] bg-[#f0f0f0] text-[12px] leading-5">
        <svg width="16" height="15" viewBox="0 0 16 15" fill="none" stroke="#6b9bd8" className="ml-1" aria-hidden="true">
          <path d="M.5.500h11v9H.5z" fill="#fff" />
          <path d="M1 2.500h10M2 6l2-2 2 2" />
          <path d="M4.500 4.500h11v10h-11z" fill="#eaf3ff" />
          <path d="M5 6.500h10M6 12l2-3 2 3 2-3 2 3" />
        </svg>
        <ul className="ml-2 flex gap-[17px]">
          {menu.map(([before, key, after]) => (
            <li key={before + key + after}>
              <a href="#">
                {before}
                <span className="underline underline-offset-2">{key}</span>
                {after}
              </a>
            </li>
          ))}
        </ul>
        <div className="ml-auto flex gap-[2px] pr-px text-[#6b7a8c]">
          {["M3.500 9.500h5", "M2.500 5.500h5v4h-5zM4.500 5v-2.500h5v4h-2", "M3 3l6 6M9 3l-6 6"].map((shape, i) => (
            <button
              key={shape}
              type="button"
              aria-label={["Свернуть окно", "Восстановить окно", "Закрыть окно"][i]}
              className="flex size-[17px] items-center justify-center border border-[#dcdcdc] bg-white"
            >
              <svg width="12" height="12" fill="none" stroke="currentColor" strokeWidth="1.500"><path d={shape} /></svg>
            </button>
          ))}
        </div>
      </nav>

      <Toolbar />
      <Charts />
      <Tabs />
      <StatusBar />

      <aside className="pointer-events-none absolute right-[74px] bottom-[52px] w-[454px] font-['Open_Sans','Noto_Sans',sans-serif] text-[#a0a0a0] opacity-70">
        <p className="text-[19px] leading-6">Активация Windows</p>
        <p className="text-[14px] leading-5 whitespace-nowrap">
          Чтобы активировать Windows, перейдите в раздел "Параметры".
        </p>
      </aside>
    </div>
  );
}
